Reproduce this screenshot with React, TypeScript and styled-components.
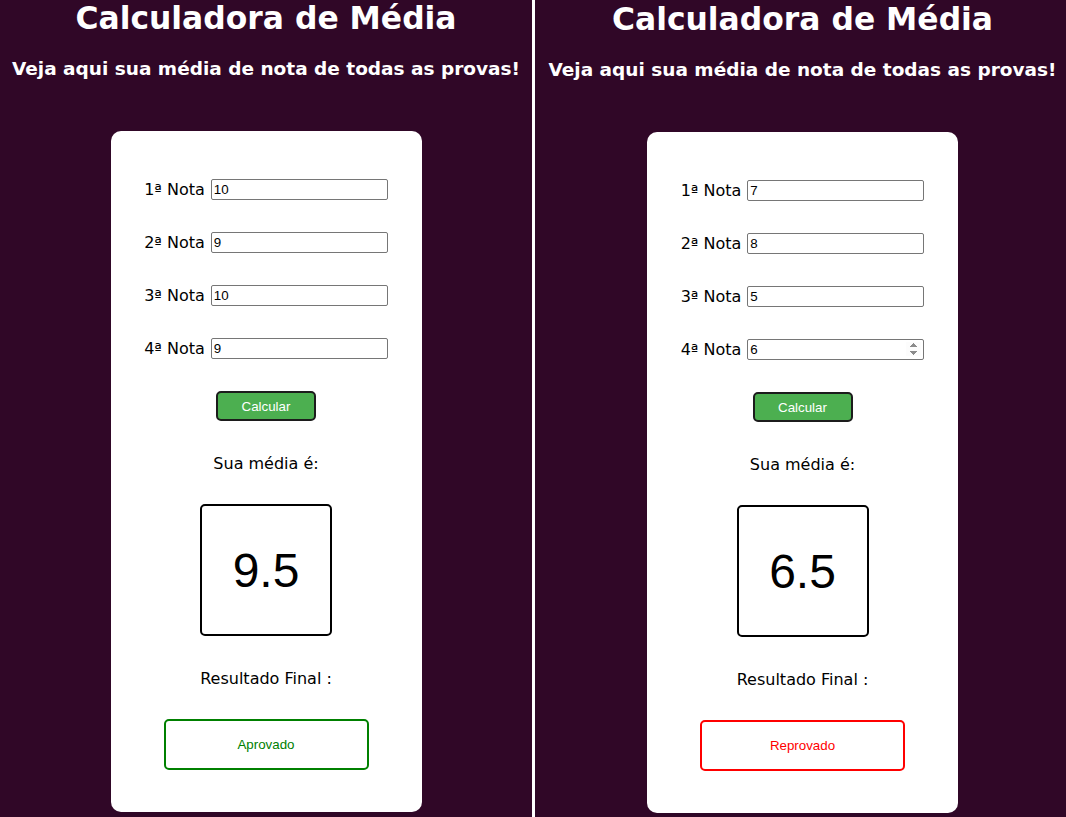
import React from "react";
import styled, { createGlobalStyle } from "styled-components";

const GlobalStyle = createGlobalStyle`
  html, body {
    margin: 0;
    padding: 0;
    background: #ffffff;
  }
  body {
    font-family: "DejaVu Sans", Verdana, sans-serif;
  }
`;

// Page: two screens side by side, white seam between
const Page = styled.div`
  display: flex;
  gap: 3px;
  width: 1066px;
  height: 817px;
  overflow: hidden;
  background: #ffffff;
`;

const Screen = styled.main<{ $width: number; $top: number; $left: number }>`
  width: ${($) => $.$width}px;
  height: 817px;
  flex: none;
  background: #300727;
  color: #ffffff;
  display: flex;
  flex-direction: column;
  align-items: center;
  padding-top: ${($) => $.$top}px;
  padding-left: ${($) => $.$left}px;
  box-sizing: border-box;
  overflow: hidden;
`;

const Title = styled.h1`
  margin: 0;
  font-size: 31.4px;
  font-weight: bold;
  line-height: 37px;
  white-space: nowrap;
`;

const Subtitle = styled.h2`
  margin: 21px 0 0;
  font-size: 18.5px;
  font-weight: bold;
  line-height: 22px;
  white-space: nowrap;
`;

const Card = styled.section`
  margin-top: 51px;
  width: 311px;
  height: 681px;
  flex: none;
  box-sizing: border-box;
  background: #ffffff;
  color: #000000;
  border-radius: 10px;
  padding: 48px 0 0;
  display: flex;
  flex-direction: column;
  align-items: center;
`;

const Fields = styled.div`
  display: flex;
  flex-direction: column;
  gap: 32px;
`;

const Row = styled.label`
  display: flex;
  align-items: center;
  gap: 6px;
  height: 21px;
  font-size: 16px;
  line-height: 19px;
`;

const NoteInput = styled.input<{ $spin?: boolean }>`
  width: 177px;
  height: 21px;
  box-sizing: border-box;
  border: 1px solid #767676;
  border-radius: 2px;
  padding: 1px 2px;
  font-family: "Liberation Sans", Arial, sans-serif;
  font-size: 13.33px;
  color: #000000;
  background: #ffffff;
  outline: none;

  &::-webkit-inner-spin-button {
    opacity: ${($) => ($.$spin ? 1 : 0)};
  }
`;

const CalcButton = styled.button`
  margin-top: 32px;
  width: 100px;
  height: 30px;
  background: #4caf50;
  color: #ffffff;
  border: 2px solid #1c1c1c;
  border-radius: 5px;
  font-family: "Liberation Sans", Arial, sans-serif;
  font-size: 13.33px;
  cursor: pointer;
`;

const Caption = styled.p<{ $gap: number }>`
  margin: ${($) => $.$gap}px 0 0;
  font-size: 16px;
  line-height: 19px;
  white-space: pre;
`;

const AverageBox = styled.div`
  margin-top: 31px;
  width: 132px;
  height: 132px;
  box-sizing: border-box;
  border: 2px solid #000000;
  border-radius: 5px;
  display: flex;
  align-items: center;
  justify-content: center;
  font-family: "Liberation Sans", Arial, sans-serif;
  font-size: 48px;
`;

const ResultBox = styled.div<{ $ok: boolean }>`
  margin-top: 31px;
  width: 205px;
  height: 51px;
  box-sizing: border-box;
  border: 2px solid ${($) => ($.$ok ? "#008000" : "#ff0000")};
  color: ${($) => ($.$ok ? "#008000" : "#ff0000")};
  border-radius: 5px;
  display: flex;
  align-items: center;
  justify-content: center;
  font-family: "Liberation Sans", Arial, sans-serif;
  font-size: 13.33px;
`;

function Calculator(params: {
  notes: string[];
  width: number;
  top: number;
  left: number;
  spinOn?: number;
}) {
  const [notes, set_notes] = React.useState<string[]>(params.notes);

  const compute = (list: string[]) =>
    list.reduce((acc, n) => acc + (parseFloat(n) || 0), 0) / list.length;

  const [average, set_average] = React.useState<number>(compute(params.notes));
  const approved = average >= 7;

  return (
    <Screen $width={params.width} $top={params.top} $left={params.left}>
      <Title>Calculadora de Média</Title>
      <Subtitle>Veja aqui sua média de nota de todas as provas!</Subtitle>
      <Card>
        <Fields>
          {notes.map((n, i) => (
            <Row key={i}>
              {i + 1}ª Nota
              <NoteInput
                type="number"
                value={n}
                $spin={params.spinOn === i}
                onChange={(e) => {
                  const next = notes.slice();
                  next[i] = e.target.value;
                  set_notes(next);
                }}
              />
            </Row>
          ))}
        </Fields>
        <CalcButton onClick={() => set_average(compute(notes))}>Calcular</CalcButton>
        <Caption $gap={33}>Sua média é:</Caption>
        <AverageBox>{average}</AverageBox>
        <Caption $gap={33}>Resultado Final :</Caption>
        <ResultBox $ok={approved}>{approved ? "Aprovado" : "Reprovado"}</ResultBox>
      </Card>
    </Screen>
  );
}

export default function App() {
  return (
    <>
      <GlobalStyle />
      <Page>
        <Calculator notes={["10", "9", "10", "9"]} width={532} top={0} left={0} />
        <Calculator notes={["7", "8", "5", "6"]} width={531} top={1} left={4} spinOn={3} />
      </Page>
    </>
  );
}
